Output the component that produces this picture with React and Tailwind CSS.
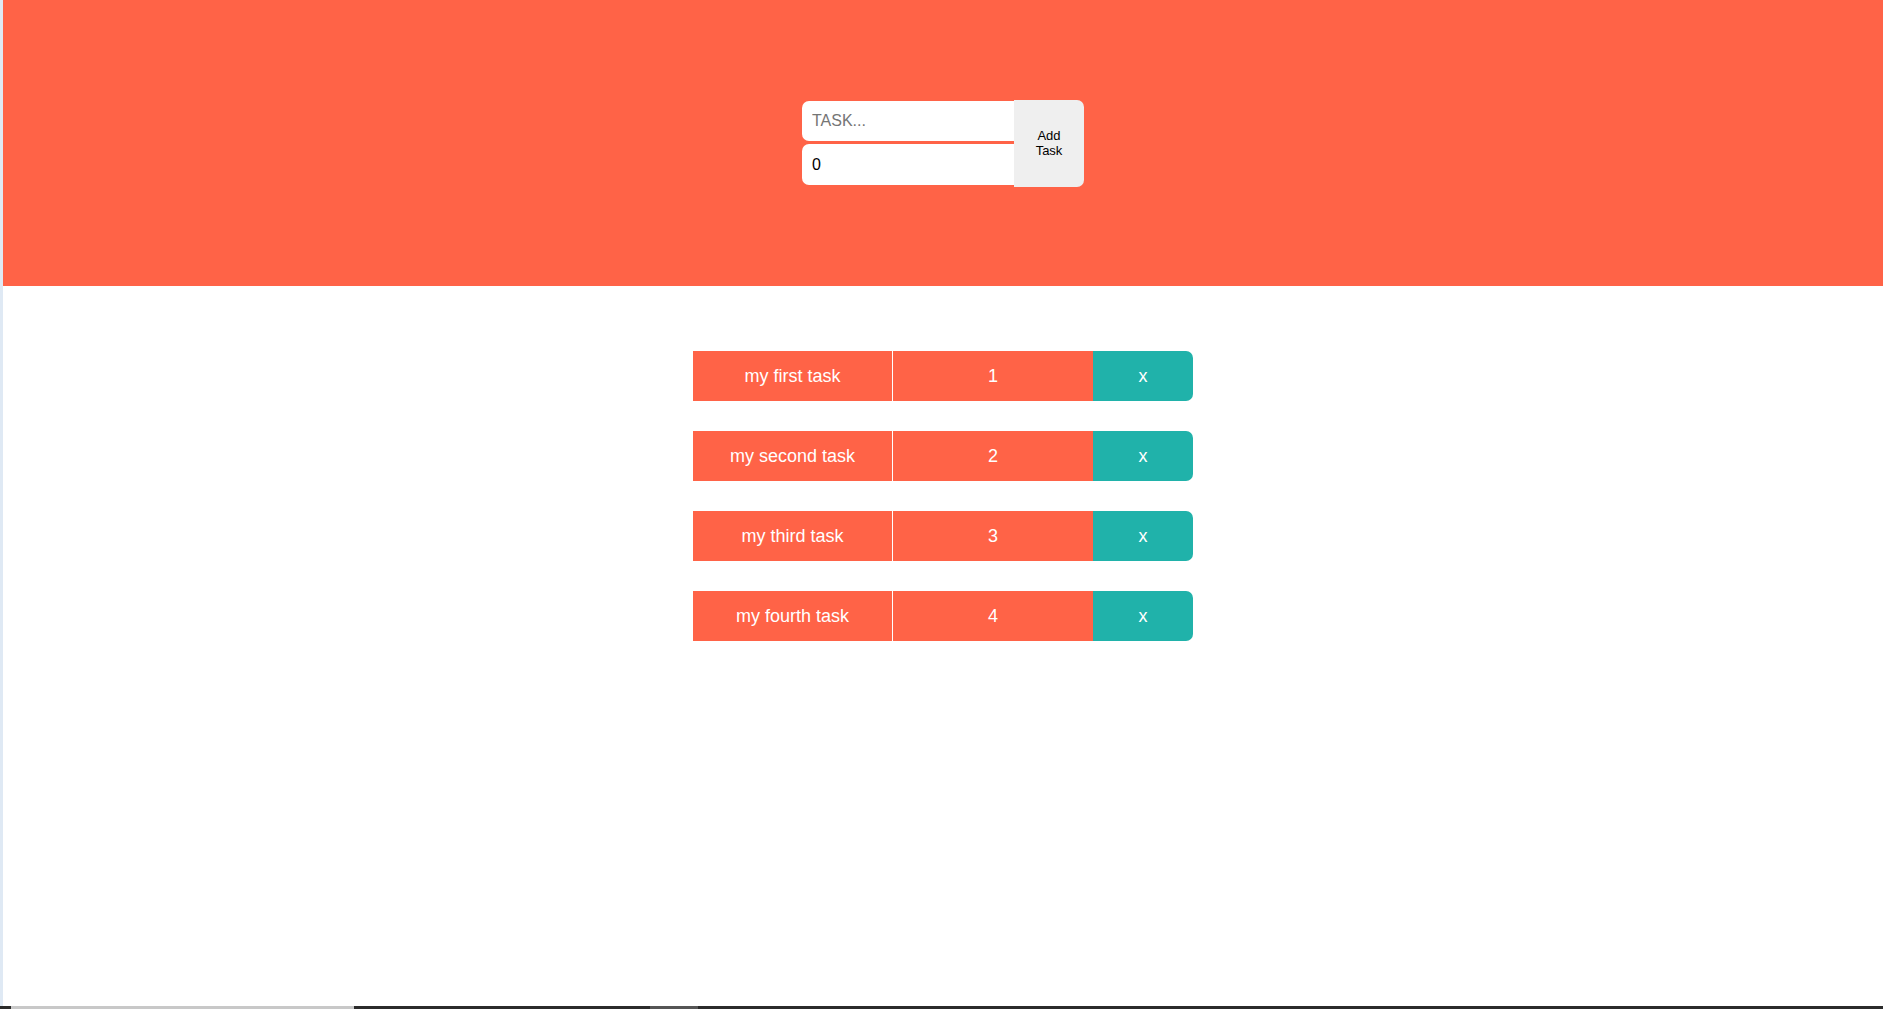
import React from 'react'

const tasks = [
  { name: 'my first task', deadline: 1 },
  { name: 'my second task', deadline: 2 },
  { name: 'my third task', deadline: 3 },
  { name: 'my fourth task', deadline: 4 },
]

export default function App() {
  return (
    <div className="h-[1009px] w-full flex flex-col bg-white font-['Liberation_Sans',Arial,sans-serif] overflow-hidden">
      <div className="flex flex-1">
        {/* left edge */}
        <div className="w-[3px] bg-[#dfe9f4]"></div>

        <div className="flex-1 flex flex-col">
          {/* Header */}
          <div className="h-[286px] bg-[#ff6347] flex items-center justify-center">
            <div className="flex items-center">
              <div className="flex flex-col gap-[3px]">
                <input
                  type="text"
                  placeholder="TASK..."
                  className="w-[212px] h-[40px] bg-white rounded-l-[7px] px-[10px] text-[16px] text-black placeholder:text-[#757575] outline-none"
                />
                <input
                  type="number"
                  defaultValue={0}
                  className="w-[212px] h-[41px] bg-white rounded-l-[7px] px-[10px] text-[16px] text-black outline-none"
                />
              </div>
              <button className="w-[70px] h-[87px] bg-[#efefef] rounded-r-[7px] text-[13px] leading-[15px] text-black px-[12px]">
                Add Task
              </button>
            </div>
          </div>

          {/* Task list */}
          <div className="flex flex-col items-center gap-[30px] pt-[65px]">
            {tasks.map((t) => (
              <div key={t.name} className="flex h-[50px] text-white text-[18px]">
                <div className="w-[200px] bg-[#ff6347] border-r border-white flex items-center justify-center">
                  {t.name}
                </div>
                <div className="w-[200px] bg-[#ff6347] flex items-center justify-center">
                  {t.deadline}
                </div>
                <button className="w-[100px] bg-[#20b2aa] rounded-r-[7px] text-[18px] text-white flex items-center justify-center">
                  x
                </button>
              </div>
            ))}
          </div>
        </div>
      </div>

      {/* bottom strip */}
      <div className="h-[3px] flex">
        <div className="w-[11px] bg-[#2b2b2b]"></div>
        <div className="w-[343px] bg-[#c8c8c8]"></div>
        <div className="w-[296px] bg-[#2b2b2b]"></div>
        <div className="w-[48px] bg-[#555555]"></div>
        <div className="flex-1 bg-[#2b2b2b]"></div>
      </div>
    </div>
  )
}
